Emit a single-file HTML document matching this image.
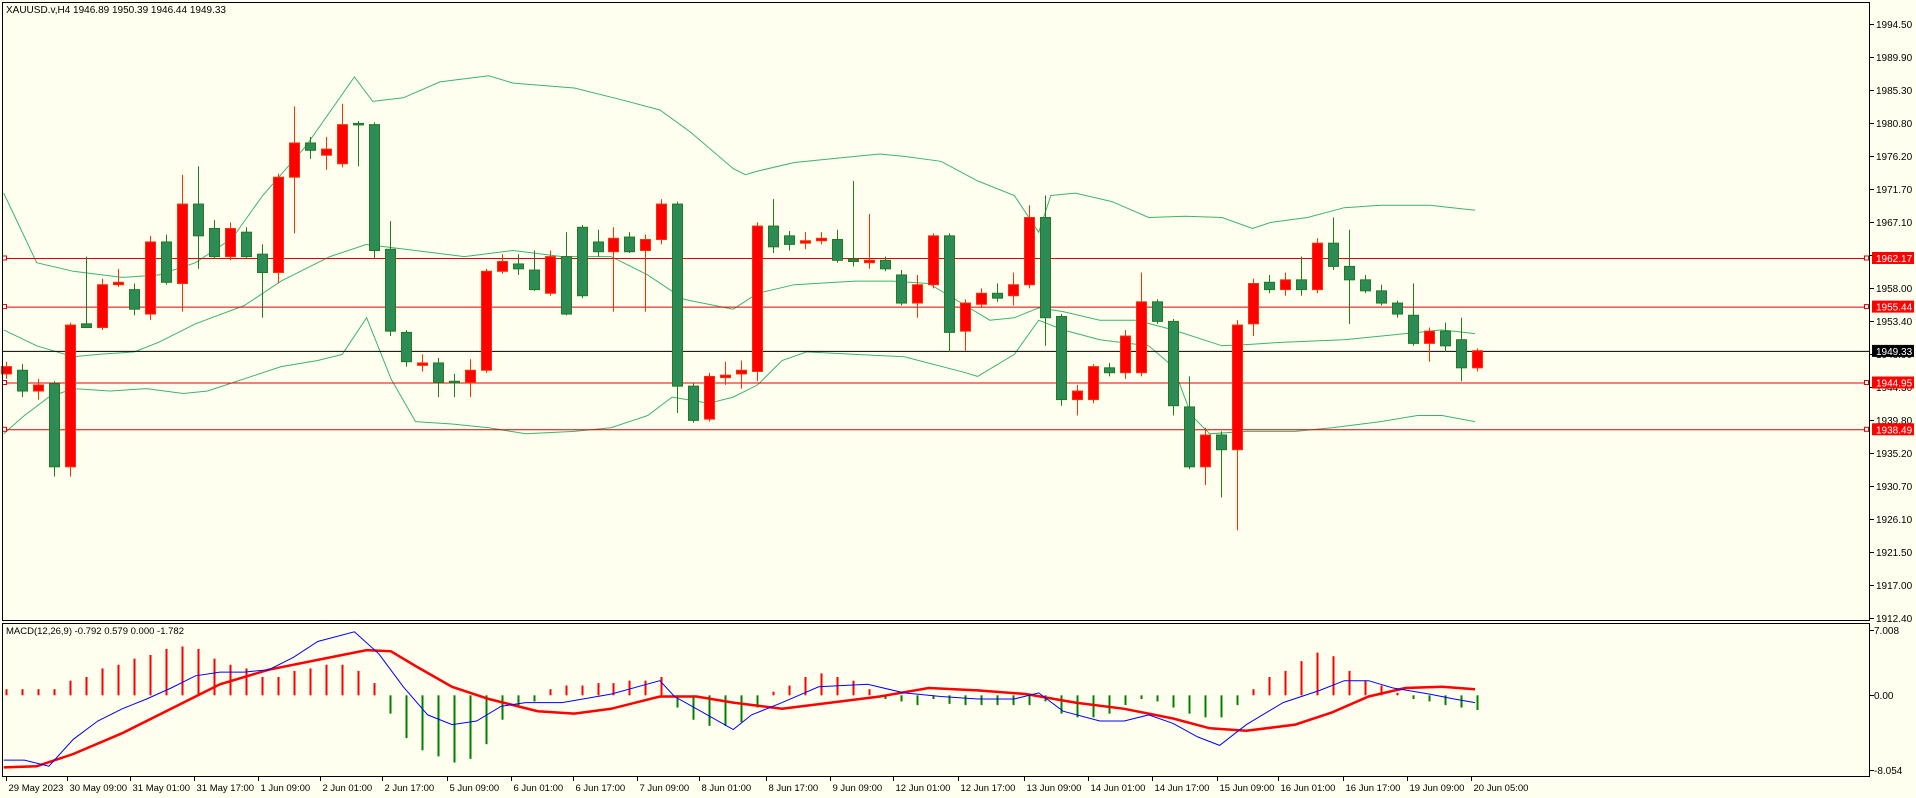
<!DOCTYPE html>
<html><head><meta charset="utf-8"><style>
html,body{margin:0;padding:0;background:#fffff0;}
svg{display:block}
text{font-family:"Liberation Sans",sans-serif;font-size:10px;fill:#000}
</style></head><body>
<svg id="s" width="1916" height="798" xmlns="http://www.w3.org/2000/svg">
<rect width="1916" height="798" fill="#fffff0"/>
<g id="plot"></g>
<rect x="2.5" y="2.5" width="1867" height="618" fill="none" stroke="#000" stroke-width="1"/>
<rect x="2.5" y="623.5" width="1867" height="153" fill="none" stroke="#000" stroke-width="1"/>
<text x="6" y="13">XAUUSD.v,H4  1946.89 1950.39 1946.44 1949.33</text>
<text x="6" y="634" style="font-size:9.5px">MACD(12,26,9) -0.792 0.579 0.000 -1.782</text>
<g id="axis"></g>
</svg>
<script>
const S=1.222,NS="http://www.w3.org/2000/svg";
const plot=document.getElementById('plot'),axis=document.getElementById('axis');
function el(p,t,a,txt){const e=document.createElementNS(NS,t);for(const k in a)e.setAttribute(k,a[k]);if(txt!==undefined)e.textContent=txt;p.appendChild(e);return e;}
function poly(pts,col,w){el(plot,'polyline',{points:pts.map(p=>(p[0]*S).toFixed(1)+','+(p[1]*S).toFixed(1)).join(' '),fill:'none',stroke:col,'stroke-width':w});}
poly([[3,158],[30,215],[60,222],[100,227],[130,225],[160,215],[190,195],[215,160],[250,120],[290,63],[305,83],[330,80],[360,67],[400,62],[420,68],[470,72],[510,82],[540,90],[565,108],[600,138],[610,143],[620,140],[650,133],[700,128],[720,126],[740,128],[770,132],[800,148],[830,160],[850,190],[860,160],[880,158],[910,165],[940,178],[970,177],[1000,178],[1025,187],[1040,182],[1070,178],[1100,170],[1130,168],[1170,168],[1207,172]],'#3cb371',1);
poly([[3,270],[30,283],[60,292],[80,290],[110,288],[130,280],[160,265],[200,250],[230,230],[270,210],[300,200],[340,205],[380,210],[420,205],[460,210],[500,210],[530,225],[560,245],[600,253],[620,240],[650,233],[700,230],[730,230],[760,232],[790,250],[810,262],[830,260],[850,252],[870,255],[900,262],[930,262],[960,270],[1000,283],[1020,282],[1050,280],[1100,278],[1150,273],[1180,270],[1207,273]],'#3cb371',1);
poly([[3,355],[20,340],[40,325],[60,318],[90,320],[120,318],[150,322],[170,320],[200,310],[230,300],[260,295],[280,290],[300,260],[320,310],[340,345],[370,347],[400,350],[430,355],[470,353],[500,350],[530,340],[550,325],[580,330],[600,325],[620,315],[640,295],[660,288],[700,290],[740,292],[790,305],[800,308],[830,290],[850,262],[870,270],[900,278],[940,283],[960,300],[975,340],[990,355],[1020,353],[1060,353],[1090,350],[1130,345],[1160,340],[1180,340],[1207,345]],'#3cb371',1);
[[258,'#e00000'],[306.6,'#e00000'],[382.5,'#e00000'],[429.3,'#e00000'],[350.9,'#000']].forEach(l=>{el(plot,'line',{x1:3,x2:1869,y1:l[0]+.5,y2:l[0]+.5,stroke:l[1],'stroke-width':1});
 if(l[1]!='#000'){el(plot,'rect',{x:2.5,y:l[0]-2,width:4,height:4,fill:'#fff',stroke:l[1]});el(plot,'rect',{x:1864.5,y:l[0]-2,width:4,height:4,fill:'#fff',stroke:l[1]});}});
const C=[['r',300,306,296,310],['g',303,320,298,325],['r',315,320,310,327],['g',314,382,312,390],['r',266,382,264,390],['g',265,268,210,268],['r',233,268,228,270],['r',231,233,220,235],['g',237,253,232,258],['r',198,257,193,262],['g',198,231,192,233],['r',167,232,143,255],['g',167,193,136,220],['g',187,210,180,212],['r',187,210,182,213],['g',190,210,186,211],['g',208,223,200,260],['r',145,223,142,232],['r',117,145,87,191],['g',117,123,112,130],['r',122,127,112,139],['r',102,134,85,137],['g',101,102,99,136],['g',102,205,100,212],['g',204,271,181,275],['g',272,296,270,300],['r',297,299,290,304],['g',297,313,293,325],['g',312,313,306,325],['r',303,313,294,325],['r',222,303,220,305],['r',214,222,208,224],['g',216,220,208,225],['g',221,237,205,238],['r',210,240,205,242],['g',210,257,190,258],['g',186,242,184,244],['g',198,206,188,210],['r',195,206,186,255],['g',194,206,190,207],['r',196,205,192,255],['r',167,196,163,200],['g',167,316,165,338],['g',316,344,313,346],['r',308,343,305,345],['r',307,309,296,315],['r',303,306,295,318],['r',185,304,182,312],['g',185,202,163,207],['g',193,200,189,205],['r',197,199,190,204],['r',195,197,190,200],['g',196,213,188,215],['g',212,214,148,218],['r',213,215,175,220],['g',213,220,210,222],['g',225,248,221,250],['r',233,248,225,260],['r',193,233,191,236],['g',193,272,191,288],['r',248,271,245,287],['r',240,249,236,252],['g',240,244,232,247],['r',233,242,223,250],['r',178,233,168,236],['g',178,260,160,283],['g',259,327,257,332],['r',320,327,315,340],['r',300,327,298,330],['g',301,305,297,308],['r',275,305,270,310],['r',247,305,223,308],['g',247,263,245,265],['g',263,332,261,340],['g',333,382,308,384],['r',356,382,350,397],['g',356,368,353,407],['r',266,368,262,434],['r',232,265,228,275],['g',231,237,225,240],['r',229,237,223,242],['g',229,237,210,242],['r',199,237,195,240],['g',199,218,178,221],['g',218,229,188,265],['g',229,238,225,240],['g',238,248,233,250],['g',248,257,246,260],['g',258,281,232,283],['r',271,281,268,296],['g',271,283,264,288],['g',278,301,260,312],['r',287,301,285,304]];
C.forEach((c,i)=>{const x=Math.round((5+13.08*i)*S)+.5;const red=c[0]=='r';const wc=red?'#ff3000':'#1e7b1e';
 el(plot,'line',{x1:x,x2:x,y1:c[3]*S,y2:c[4]*S,stroke:wc,'stroke-width':1});
 let t=c[1]*S,b=c[2]*S;if(b-t<1.5)b=t+1.5;
 el(plot,'rect',{x:x-5,y:t,width:10,height:b-t,fill:red?'#ff0000':'#2e8b57',stroke:wc,'stroke-width':1});});
const H=[5,5,5,5,12,15,22,25,30,33,38,40,38,30,25,22,15,15,20,22,25,25,20,10,-15,-35,-45,-50,-55,-52,-40,-20,-8,-5,5,8,8,10,10,12,12,15,-10,-20,-25,-25,-22,-10,3,8,15,18,15,12,5,-3,-5,-8,-3,-7,-8,-8,-8,-8,-8,-5,-15,-18,-18,-15,-8,-3,-5,-10,-15,-18,-18,-8,5,15,20,28,35,32,20,12,8,2,-3,-5,-8,-10,-12];
const Z=569*S;
H.forEach((h,i)=>{const x=Math.round((5+13.08*i)*S)+.5;el(plot,'line',{x1:x,x2:x,y1:Z,y2:Z-h*S,stroke:h>0?'#ff0000':'#008000','stroke-width':2});});
poly([[3,628],[30,627],[60,617],[100,600],[140,580],[180,560],[220,548],[260,540],[300,532],[320,533],[340,545],[370,562],[400,572],[440,582],[470,584],[500,580],[540,570],[570,570],[600,575],[640,580],[680,575],[720,570],[760,563],[800,565],[840,568],[880,575],[920,580],[960,588],[990,596],[1020,598],[1060,593],[1090,583],[1120,570],[1150,563],[1180,562],[1207,564]],'#ff0000',2.5);
poly([[3,622],[20,622],[40,627],[60,605],[80,590],[100,580],[120,572],[140,563],[160,553],[180,550],[200,550],[220,548],[240,538],[260,525],[290,517],[310,535],[330,562],[350,585],[370,593],[390,590],[410,578],[430,575],[460,575],[500,568],[540,557],[552,570],[570,580],[600,597],[615,585],[640,575],[670,562],[710,560],[740,567],[770,570],[800,572],[830,572],[850,567],[870,582],[900,590],[920,590],[940,585],[960,592],[980,603],[998,610],[1020,593],[1050,575],[1080,565],[1100,557],[1120,557],[1140,563],[1170,568],[1190,572],[1207,575]],'#0000ff',1);
const P=['1994.50','1989.90','1985.30','1980.80','1976.20','1971.70','1967.10','1962.50','1958.00','1953.40','1948.90','1944.30','1939.80','1935.20','1930.70','1926.10','1921.50','1917.00','1912.40'];
P.forEach((p,k)=>{const y=24+33*k;el(axis,'line',{x1:1870,x2:1874,y1:y+.5,y2:y+.5,stroke:'#000'});el(axis,'text',{x:1876,y:y+4},p);});
[[258,'1962.17','#ff0000'],[306.6,'1955.44','#ff0000'],[382.5,'1944.95','#ff0000'],[429.3,'1938.49','#ff0000'],[350.9,'1949.33','#000']].forEach(t=>{el(axis,'rect',{x:1872,y:t[0]-6,width:42,height:12,fill:t[2]});el(axis,'text',{x:1876,y:t[0]+4,style:'fill:#fff'},t[1]);});
[[630,'7.008'],[695,'0.00'],[770,'-8.054']].forEach(t=>{el(axis,'line',{x1:1870,x2:1874,y1:t[0]+.5,y2:t[0]+.5,stroke:'#000'});el(axis,'text',{x:1874,y:t[0]+4},t[1]);});
const T=[[5,'29 May 2023'],[55,'30 May 09:00'],[106,'31 May 01:00'],[159,'31 May 17:00'],[211,'1 Jun 09:00'],[262,'2 Jun 01:00'],[313,'2 Jun 17:00'],[366,'5 Jun 09:00'],[418,'6 Jun 01:00'],[469,'6 Jun 17:00'],[521,'7 Jun 09:00'],[572,'8 Jun 01:00'],[627,'8 Jun 17:00'],[679,'9 Jun 09:00'],[731,'12 Jun 01:00'],[784,'12 Jun 17:00'],[838,'13 Jun 09:00'],[890,'14 Jun 01:00'],[943,'14 Jun 17:00'],[996,'15 Jun 09:00'],[1046,'16 Jun 01:00'],[1099,'16 Jun 17:00'],[1151,'19 Jun 09:00'],[1204,'20 Jun 05:00']];
T.forEach(t=>{const x=Math.round(t[0]*S)+.5;el(axis,'line',{x1:x,x2:x,y1:777,y2:781,stroke:'#000'});el(axis,'text',{x:x+2,y:791,style:'font-size:9.5px'},t[1]);});
</script>
</body></html>
